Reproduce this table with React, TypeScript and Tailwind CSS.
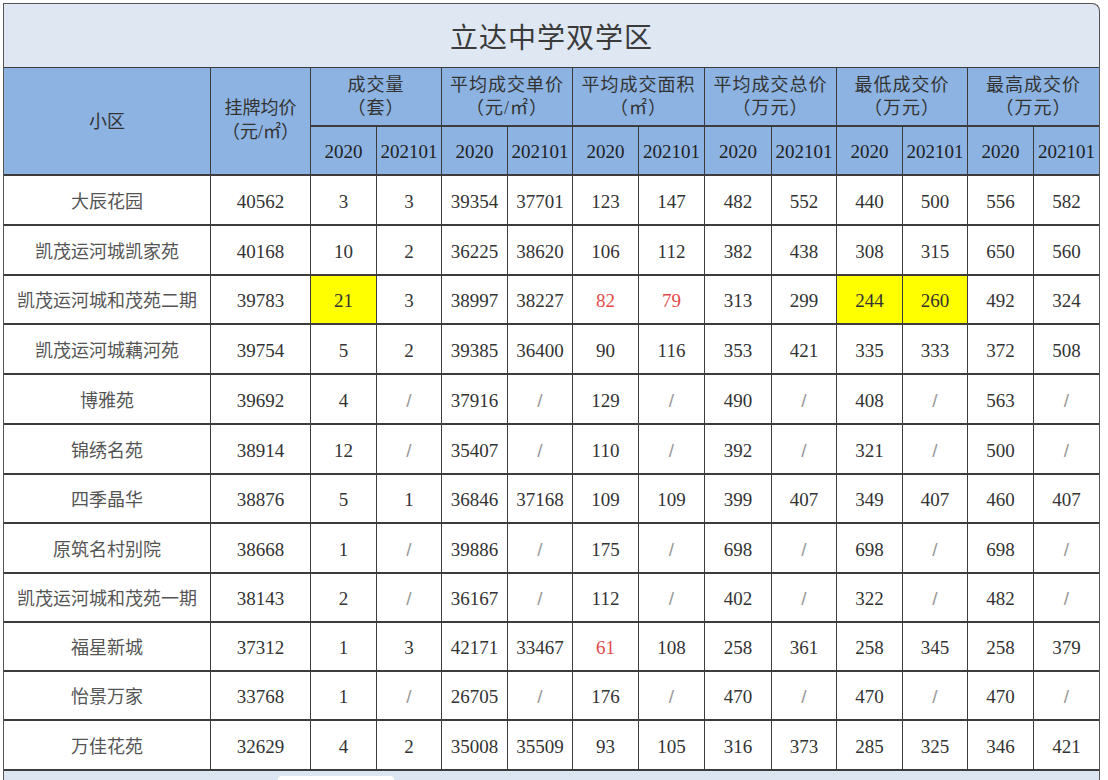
import React from "react";

type Cell = string | { v: string; hl?: "yellow" | "red" };

interface Row {
  name: string;
  h: string;
  cells: Cell[];
}

const rows: Row[] = [
  { name: "大辰花园", h: "h-[50px]", cells: ["40562", "3", "3", "39354", "37701", "123", "147", "482", "552", "440", "500", "556", "582"] },
  { name: "凯茂运河城凯家苑", h: "h-[50px]", cells: ["40168", "10", "2", "36225", "38620", "106", "112", "382", "438", "308", "315", "650", "560"] },
  {
    name: "凯茂运河城和茂苑二期",
    h: "h-[49px]",
    cells: ["39783", { v: "21", hl: "yellow" }, "3", "38997", "38227", { v: "82", hl: "red" }, { v: "79", hl: "red" }, "313", "299", { v: "244", hl: "yellow" }, { v: "260", hl: "yellow" }, "492", "324"],
  },
  { name: "凯茂运河城藕河苑", h: "h-[50px]", cells: ["39754", "5", "2", "39385", "36400", "90", "116", "353", "421", "335", "333", "372", "508"] },
  { name: "博雅苑", h: "h-[50px]", cells: ["39692", "4", "/", "37916", "/", "129", "/", "490", "/", "408", "/", "563", "/"] },
  { name: "锦绣名苑", h: "h-[50px]", cells: ["38914", "12", "/", "35407", "/", "110", "/", "392", "/", "321", "/", "500", "/"] },
  { name: "四季晶华", h: "h-[49px]", cells: ["38876", "5", "1", "36846", "37168", "109", "109", "399", "407", "349", "407", "460", "407"] },
  { name: "原筑名村别院", h: "h-[50px]", cells: ["38668", "1", "/", "39886", "/", "175", "/", "698", "/", "698", "/", "698", "/"] },
  { name: "凯茂运河城和茂苑一期", h: "h-[49px]", cells: ["38143", "2", "/", "36167", "/", "112", "/", "402", "/", "322", "/", "482", "/"] },
  { name: "福星新城", h: "h-[49px]", cells: ["37312", "1", "3", "42171", "33467", { v: "61", hl: "red" }, "108", "258", "361", "258", "345", "258", "379"] },
  { name: "怡景万家", h: "h-[49px]", cells: ["33768", "1", "/", "26705", "/", "176", "/", "470", "/", "470", "/", "470", "/"] },
  { name: "万佳花苑", h: "h-[50px]", cells: ["32629", "4", "2", "35008", "35509", "93", "105", "316", "373", "285", "325", "346", "421"] },
];

const groups = [
  ["成交量", "（套）"],
  ["平均成交单价", "（元/㎡）"],
  ["平均成交面积", "（㎡）"],
  ["平均成交总价", "（万元）"],
  ["最低成交价", "（万元）"],
  ["最高成交价", "（万元）"],
];

const cols = "grid-cols-[207px_100px_66px_65px_66px_65px_66px_66px_67px_65px_66px_65px_66px_65px]";

export default function App() {
  return (
    <div className="min-h-screen bg-white pt-[3px] font-['Liberation_Serif','Noto_Sans_CJK_SC',serif]">
      <div className="ml-[3px] w-[1097px] overflow-hidden rounded-tr-lg border-x border-t border-[#555] bg-[#dee7f2]">
        <div className="flex h-[64px] items-center justify-center border-b border-[#3c3c3c] font-['Noto_Sans_CJK_SC',sans-serif] text-[28px] tracking-[1px] text-[#3a3a3a]">
          立达中学双学区
        </div>

        <div className={"grid " + cols}>
          {/* header */}
          <div className="row-span-2 flex items-center justify-center border-r border-b-2 border-[#3c3c3c] bg-[#8db3e2] pt-[2px] text-[18px] text-[#333]">
            小区
          </div>
          <div className="row-span-2 flex flex-col items-center justify-center border-r border-b-2 border-[#3c3c3c] bg-[#8db3e2] pb-[2px] text-[18px] leading-[24px] text-[#333]">
            <span>挂牌均价</span>
            <span>（元/㎡）</span>
          </div>
          {groups.map(([t, u], i) => (
            <div
              key={t}
              className={
                "col-span-2 flex h-[59px] flex-col items-center justify-center border-b-2 border-[#3c3c3c] bg-[#8db3e2] text-[18px] leading-[23px] tracking-[1px] text-[#333] " +
                (i < groups.length - 1 ? "border-r" : "")
              }
            >
              <span>{t}</span>
              <span>{u}</span>
            </div>
          ))}
          {groups.map((g, i) => (
            <React.Fragment key={g[0]}>
              <div className="flex h-[49px] items-center justify-center border-r border-b-2 border-[#3c3c3c] bg-[#8db3e2] pt-[3px] text-[19px] text-[#222]">
                2020
              </div>
              <div
                className={
                  "flex h-[49px] items-center justify-center border-b-2 border-[#3c3c3c] bg-[#8db3e2] pt-[3px] text-[19px] text-[#222] " +
                  (i < groups.length - 1 ? "border-r" : "")
                }
              >
                202101
              </div>
            </React.Fragment>
          ))}

          {/* body */}
          {rows.map((r) => (
            <React.Fragment key={r.name}>
              <div className={"flex items-center justify-center border-r border-b-2 border-[#3c3c3c] bg-white font-['Noto_Sans_CJK_SC',sans-serif] text-[18px] text-[#555] " + r.h}>
                {r.name}
              </div>
              {r.cells.map((c, j) => {
                const v = typeof c === "string" ? c : c.v;
                const hl = typeof c === "string" ? undefined : c.hl;
                const slash = v === "/";
                return (
                  <div
                    key={j}
                    className={
                      "flex items-center justify-center border-b-2 border-[#3c3c3c] pt-[4px] text-[19px] " +
                      r.h +
                      " " +
                      (j < r.cells.length - 1 ? "border-r " : "") +
                      (hl === "yellow" ? "bg-[#ffff00] text-[#333] " : "bg-white ") +
                      (hl === "red" ? "text-[#e34a4a] " : slash ? "text-[#999] font-['Liberation_Sans',sans-serif] text-[15px] " : hl ? "" : "text-[#333] ")
                    }
                  >
                    {v}
                  </div>
                );
              })}
            </React.Fragment>
          ))}
        </div>

        <div className="flex h-[9px] items-end bg-[#dce6f2]">
          <div className="ml-[274px] h-[4px] w-[116px] rounded-t-md bg-white" />
        </div>
      </div>
    </div>
  );
}
